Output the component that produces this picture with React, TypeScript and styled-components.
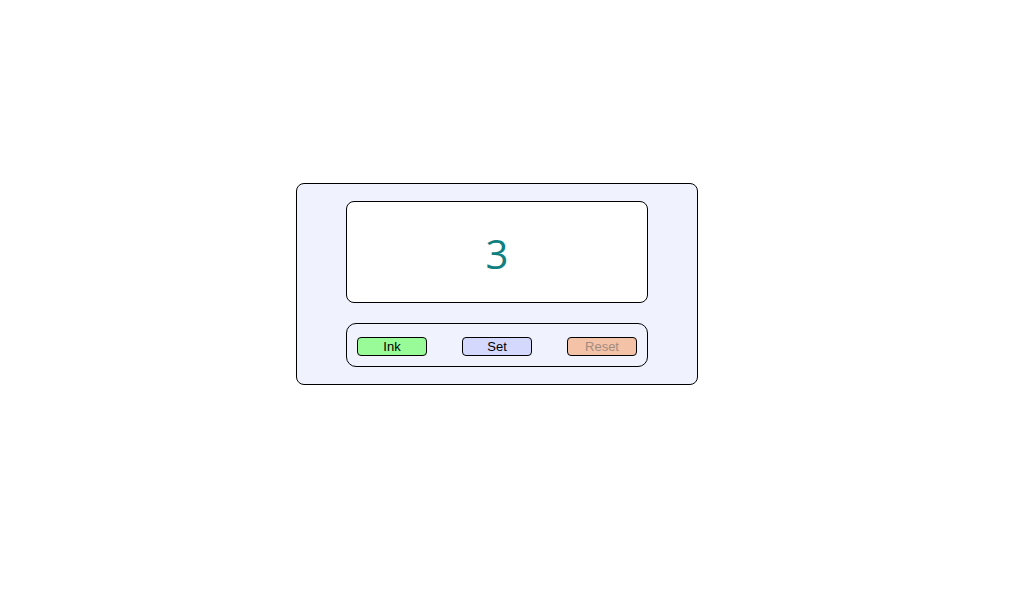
import React from "react";
import styled, { createGlobalStyle } from "styled-components";

const Global = createGlobalStyle`
  html, body { margin: 0; padding: 0; background: #ffffff; }
  body { font-family: "Liberation Sans", Arial, sans-serif; }
`;

const Page = styled.div`
  padding: 183px 0 0 296px;
`;

const Panel = styled.div`
  box-sizing: border-box;
  width: 402px;
  height: 202px;
  border: 1px solid #000;
  border-radius: 8px;
  background: #f0f3fe;
  padding: 17px 49px 0;
  display: flex;
  flex-direction: column;
  gap: 20px;
`;

const Display = styled.div`
  box-sizing: border-box;
  height: 102px;
  border: 1px solid #000;
  border-radius: 8px;
  background: #ffffff;
  display: flex;
  align-items: center;
  justify-content: center;
  font-family: "Open Sans", "Noto Sans", sans-serif;
  font-size: 40px;
  color: #107f7f;
  padding-top: 3px;
`;

const Bar = styled.div`
  box-sizing: border-box;
  height: 44px;
  border: 1px solid #000;
  border-radius: 10px;
  padding: 13px 10px 0;
  display: flex;
  justify-content: space-between;
  align-items: flex-start;
`;

const Button = styled.button<{ $bg: string; $fg: string }>`
  box-sizing: border-box;
  width: 70px;
  height: 19px;
  border: 1px solid #000;
  border-radius: 4px;
  background: ${(p) => p.$bg};
  color: ${(p) => p.$fg};
  font-family: "Liberation Sans", Arial, sans-serif;
  font-size: 13px;
  line-height: 17px;
  padding: 0;
  cursor: pointer;
`;

export default function App() {
  return (
    <>
      <Global />
      <Page>
        <Panel>
          <Display>3</Display>
          <Bar>
            <Button $bg="#98fb98" $fg="#000">Ink</Button>
            <Button $bg="#d4d8fc" $fg="#000">Set</Button>
            <Button $bg="#f4c2a6" $fg="#a08c82" disabled>Reset</Button>
          </Bar>
        </Panel>
      </Page>
    </>
  );
}
